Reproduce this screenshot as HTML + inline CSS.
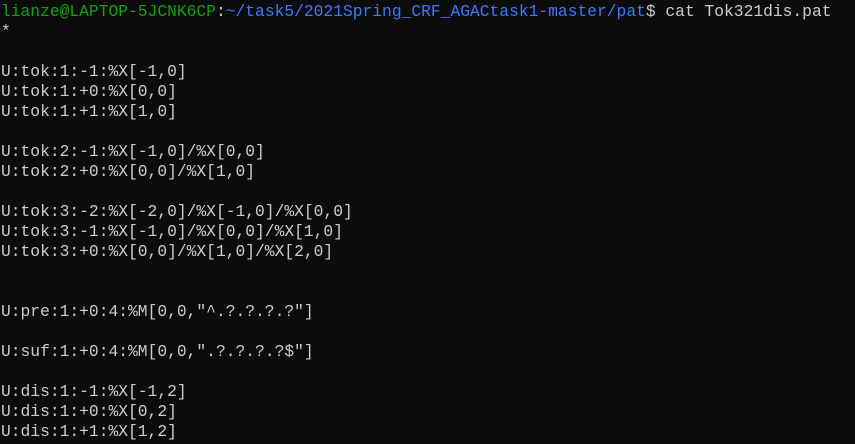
<!DOCTYPE html>
<html><head><meta charset="utf-8"><style>
html,body{margin:0;padding:0;background:#0c0c0c;width:855px;height:444px;overflow:hidden}
pre{margin:0;padding:2px 0 0 1px;font-family:"Liberation Mono",monospace;font-size:16.3px;line-height:20px;color:#cccccc;white-space:pre}
.g{color:#16c60c;color:#13a10e}.b{color:#3b78ff}
</style></head><body><pre><span class="g">lianze@LAPTOP-5JCNK6CP</span>:<span class="b">~/task5/2021Spring_CRF_AGACtask1-master/pat</span>$ cat Tok321dis.pat
*

U:tok:1:-1:%X[-1,0]
U:tok:1:+0:%X[0,0]
U:tok:1:+1:%X[1,0]

U:tok:2:-1:%X[-1,0]/%X[0,0]
U:tok:2:+0:%X[0,0]/%X[1,0]

U:tok:3:-2:%X[-2,0]/%X[-1,0]/%X[0,0]
U:tok:3:-1:%X[-1,0]/%X[0,0]/%X[1,0]
U:tok:3:+0:%X[0,0]/%X[1,0]/%X[2,0]


U:pre:1:+0:4:%M[0,0,"^.?.?.?.?"]

U:suf:1:+0:4:%M[0,0,".?.?.?.?$"]

U:dis:1:-1:%X[-1,2]
U:dis:1:+0:%X[0,2]
U:dis:1:+1:%X[1,2]</pre></body></html>
